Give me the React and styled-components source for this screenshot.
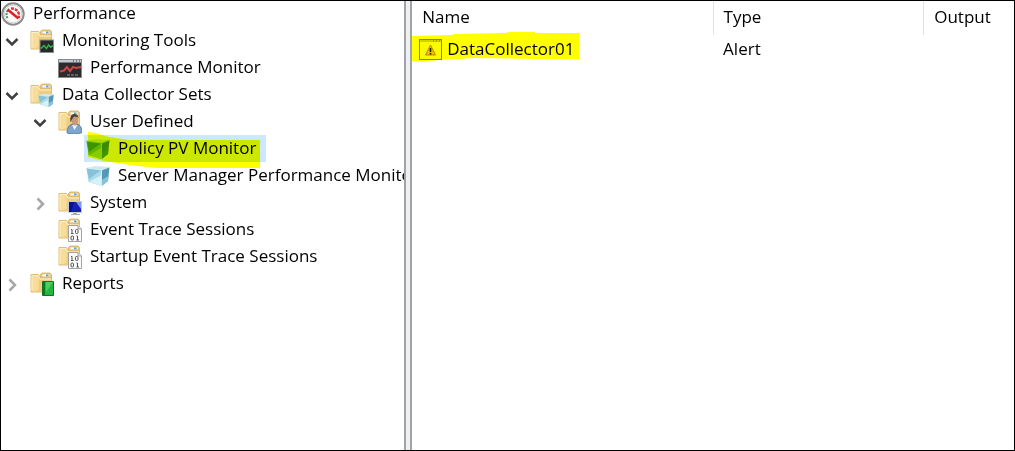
import React from "react";
import styled, { createGlobalStyle, css } from "styled-components";

const GlobalStyle = createGlobalStyle`
  * { box-sizing: border-box; }
  body {
    margin: 0;
    background: #fff;
    color: #000;
    font-family: "Open Sans", "Noto Sans", sans-serif;
    font-size: 17px;
    line-height: 24px;
  }
`;

const Frame = styled.main`
  display: flex;
  min-height: 100vh;
  border: 1px solid #000;
`;

const TreePane = styled.nav`
  flex: 0 0 40%;
  min-width: 0;
  overflow: hidden;
  border-right: 2px solid #a0a3a9;
`;

const Splitter = styled.div`
  flex: 0 0 4px;
  background: #f0f0f0;
`;

const ListPane = styled.section`
  flex: 1 1 0;
  min-width: 0;
  border-left: 2px solid #a0a3a9;
`;

const Branch = styled.ul`
  list-style: none;
  margin: 0;
  padding: 0;
`;

const Row = styled.div`
  display: flex;
  align-items: center;
  height: ${(p) => (p.$level === 0 ? 26 : 27)}px;
  padding-left: ${(p) => Math.max(0, p.$level - 1) * 28}px;
`;

const Slot = styled.span`
  flex: 0 0 29px;
  display: flex;
  align-items: center;
`;

const Expander = styled.button`
  display: flex;
  margin: 2px 0 0 3px;
  padding: 0;
  border: 0;
  background: none;
  color: ${(p) => (p.$open ? "#404040" : "#a6a6a6")};
`;

const Item = styled.span`
  position: relative;
  display: flex;
  align-items: center;
  gap: 8px;
  height: 100%;
  white-space: nowrap;
  ${(p) =>
    p.$selected &&
    css`
      margin-left: -2px;
      padding: 0 10px 0 2px;
      background: #cce8ff;
    `}
`;

const Label = styled.span`
  padding-bottom: 2px;
`;

const Marker = styled.svg`
  position: absolute;
  left: 0;
  top: 0;
  overflow: visible;
  pointer-events: none;
  mix-blend-mode: multiply;
`;

const Picture = styled.svg`
  flex: none;
  display: block;
`;

const Table = styled.table`
  width: 100%;
  table-layout: fixed;
  border-collapse: collapse;
`;

const HeadCell = styled.th`
  width: ${(p) => p.$width};
  height: 34px;
  padding: 0 0 2px 10px;
  text-align: left;
  font-weight: 400;
  border-right: ${(p) => (p.$last ? "0" : "1px solid #e2e2e2")};
`;

const Cell = styled.td`
  height: 30px;
  padding: 0 0 2px 10px;
`;

const NameCell = styled(Cell)`
  position: relative;
  padding: 0 0 0 7px;
`;

const NameContent = styled.span`
  display: flex;
  align-items: center;
  gap: 4px;
`;

function Icon({ children }) {
  return (
    <Picture width="24" height="24" viewBox="0 0 24 24" aria-hidden="true">
      {children}
    </Picture>
  );
}

function Folder({ children }) {
  return (
    <Icon>
      <path d="M10.500 6V2.500L12 1h8l1.500 1.500V6z" fill="#e8c983" stroke="#d0ad66" strokeWidth=".8" />
      <rect x="12.500" y="2.500" width="7" height="1.800" fill="#fff" />
      <rect x="16" y="2.500" width="2.500" height="1.800" fill="#57a5d8" />
      <path d="M1 2.500h7.500L10.500 6h11v14H1z" fill="#f7dd99" stroke="#dcb76b" strokeWidth=".9" />
      <path d="M4 20 8.500 17.500V6.500H21V20z" fill="#efcd80" />
      <path d="M2 3.500v15.500M2 3.500h6l2 3.500h11" fill="none" stroke="#fff0c8" />
      {children}
    </Icon>
  );
}

const cubeColors = {
  green: { top: "#a9dc8c", front: "#62b53c", side: "#3b8a2c", shade: "#3f9530", light: "#86cc5e", edge: "#8fd06d" },
  blue: { top: "#cdeaf3", front: "#aadcea", side: "#5598b5", shade: "#86c2d8", light: "#d6f1f8", edge: "#d9f1f7" },
};

function Cube({ tone = "blue" }) {
  const c = cubeColors[tone];
  return (
    <g>
      <path d="M0.500 4 9 2l14.500 1-8 3z" fill={c.top} />
      <path d="m0.500 4 15 2v16L2.500 18z" fill={c.front} />
      <path d="m0.500 4 15 2L3 15z" fill={c.shade} />
      <path d="M15.500 11v11L3 18z" fill={c.light} />
      <path d="m15.500 6 8-3-1.500 14-6.500 5z" fill={c.side} />
      <path d="m15.500 16 7-4-.5 5-6.500 5z" fill={c.shade} />
      <path d="m0.500 4 15 2 8-3M15.500 6v16" fill="none" stroke={c.edge} strokeWidth=".9" />
    </g>
  );
}

const icons = {
  gauge: (
    <Icon>
      <circle cx="12" cy="12" r="10.700" fill="#fff" stroke="#8b8b8b" strokeWidth="2" />
      <circle cx="12" cy="12" r="8.800" fill="#fafafa" stroke="#d2d2d2" />
      <path d="M6.500 16A7 7 0 0 1 8 7" fill="none" stroke="#4b8b68" strokeWidth="2" strokeDasharray="2 1" />
      <path d="M10 6.500a7 7 0 0 1 7.500 9.500" fill="none" stroke="#df3838" strokeWidth="2.500" strokeDasharray="3 1" />
      <path d="m6.500 7.500 11 9" stroke="#e01d25" strokeWidth="2.500" />
    </Icon>
  ),
  tools: (
    <Folder>
      <rect x="10" y="11" width="13.500" height="12.500" fill="#262b29" stroke="#8b8d91" />
      <path d="m11 19.500 3-3 2.500 3 2-3.500 2 2 2.500-1" fill="none" stroke="#35b64d" strokeWidth="1.500" />
    </Folder>
  ),
  monitor: (
    <Icon>
      <rect x="0.500" y="3.500" width="23" height="18" fill="#2d2b2b" stroke="#88898b" />
      <path d="M1 4h22v2.500H1z" fill="#c2cbd2" />
      <path d="M15 5h1m2 0h1m2 0h1" stroke="#566573" strokeWidth="1.500" />
      <path d="m2 15.500 4-1 3-3.500 3 4 3-4 3 1 5-1" fill="none" stroke="#d04848" strokeWidth="2" />
      <path d="M9 19h11" stroke="#999" strokeDasharray="3 1" />
    </Icon>
  ),
  sets: (
    <Folder>
      <g transform="translate(8 9.500) scale(.67)">
        <Cube />
      </g>
    </Folder>
  ),
  user: (
    <Folder>
      <path d="M9 23c0-5 2-8 5-8.500h5c3 0 5 3 5 8-4 2-10 2-15 .5z" fill="#7ea5d0" stroke="#4a709c" strokeWidth=".8" />
      <path d="m14 15 2.500 5 3-5" fill="#eef3f7" />
      <ellipse cx="16.700" cy="10" rx="3.500" ry="5.500" fill="#c79a7b" />
      <path d="M12.500 12c-2-10 8-10 8.500-3l-1-2-4-.5-1.500 2z" fill="#4b4039" />
    </Folder>
  ),
  green: (
    <Icon>
      <Cube tone="green" />
    </Icon>
  ),
  blue: (
    <Icon>
      <Cube />
    </Icon>
  ),
  system: (
    <Folder>
      <rect x="10.500" y="10.500" width="13" height="11" fill="#1620b4" stroke="#c9ccd3" />
      <path d="M18 11h5v7z" fill="#7f95f2" />
      <path d="M11 11h5l-3 10h-2z" fill="#0a1190" />
      <path d="M15 22h4v1h3v1h-9v-1h2z" fill="#a8abb0" />
    </Folder>
  ),
  trace: (
    <Folder>
      <path d="M10.500 7.500H20l3.500 3.500v12.500h-13z" fill="#fafafa" stroke="#a3a3a3" />
      <path d="M20 7.500V11h3.500" fill="#ddd" stroke="#a3a3a3" />
      <path d="M13 11.500h1v4m-1 0h2.500M18.500 18h1v4m-1 0h2.500" fill="none" stroke="#555" />
      <rect x="17.500" y="11.500" width="2.500" height="4" rx="1" fill="none" stroke="#555" />
      <rect x="13" y="18" width="2.500" height="4" rx="1" fill="none" stroke="#555" />
    </Folder>
  ),
  reports: (
    <Folder>
      <path d="M12.500 9.500h11v14h-11z" fill="#22b83f" stroke="#176f28" />
      <path d="M13 10h2v13h-2z" fill="#087c24" />
      <path d="M16 10h7l-7 10z" fill="#6bdc78" opacity=".6" />
    </Folder>
  ),
  alert: (
    <Icon>
      <rect x="0.500" y="1.500" width="22" height="20" fill="#fbfbfb" stroke="#8c8c8c" />
      <path d="M1 2h21v2H1z" fill="#d2d2d2" />
      <path d="M14 3h1m2 0h1m2 0h1" stroke="#777" />
      <path d="m11.500 7 5 10h-10z" fill="#f1c14b" stroke="#bd8530" strokeLinejoin="round" />
      <path d="M11.500 10v4m0 1v1.500" stroke="#222" strokeWidth="1.600" />
    </Icon>
  ),
};

const tree = [
  {
    label: "Performance",
    icon: "gauge",
    children: [
      { label: "Monitoring Tools", icon: "tools", open: true, children: [{ label: "Performance Monitor", icon: "monitor" }] },
      {
        label: "Data Collector Sets",
        icon: "sets",
        open: true,
        children: [
          {
            label: "User Defined",
            icon: "user",
            open: true,
            children: [
              { label: "Policy PV Monitor", icon: "green", selected: true },
              { label: "Server Manager Performance Monitor", icon: "blue" },
            ],
          },
          { label: "System", icon: "system", open: false },
          { label: "Event Trace Sessions", icon: "trace" },
          { label: "Startup Event Trace Sessions", icon: "trace" },
        ],
      },
      { label: "Reports", icon: "reports", open: false },
    ],
  },
];

function Node({ node, level }) {
  const { label, icon, open, selected, children } = node;
  return (
    <li>
      <Row $level={level}>
        {level > 0 && (
          <Slot>
            {open !== undefined && (
              <Expander type="button" $open={open} aria-expanded={open} aria-label={label}>
                <svg width="16" height="16" viewBox="0 0 16 16" fill="none" stroke="currentColor" strokeWidth="2.500">
                  <path d={open ? "m2.500 5 5.500 5.500L13.500 5" : "m5.500 2.500 5.500 5.500-5.500 5.500"} />
                </svg>
              </Expander>
            )}
          </Slot>
        )}
        <Item $selected={selected}>
          {icons[icon]}
          <Label>{label}</Label>
          {selected && (
            <Marker width="176" height="34" aria-hidden="true">
              <path d="M4-3 12-2 25 2 45 5H176V33H72L46 30 20 26 4 22z" fill="#ff0" />
            </Marker>
          )}
        </Item>
      </Row>
      {children && (
        <Branch>
          {children.map((c) => (
            <Node key={c.label} node={c} level={level + 1} />
          ))}
        </Branch>
      )}
    </li>
  );
}

export default function App() {
  return (
    <>
      <GlobalStyle />
      <Frame>
        <TreePane aria-label="Console tree">
          <Branch>
            {tree.map((n) => (
              <Node key={n.label} node={n} level={0} />
            ))}
          </Branch>
        </TreePane>
        <Splitter />
        <ListPane>
          <Table>
            <thead>
              <tr>
                <HeadCell $width="50%">Name</HeadCell>
                <HeadCell $width="35%">Type</HeadCell>
                <HeadCell $width="15%" $last>Output</HeadCell>
              </tr>
            </thead>
            <tbody>
              <tr>
                <NameCell>
                  <NameContent>
                    {icons.alert}
                    <Label>DataCollector01</Label>
                  </NameContent>
                  <Marker width="168" height="30" aria-hidden="true">
                    <path d="M0 1 41 0 42-1 95-2V-3H123V-2H167V24H123L60 23 48 24 26 25 12 27 0 26z" fill="#ff0" />
                  </Marker>
                </NameCell>
                <Cell>Alert</Cell>
                <Cell />
              </tr>
            </tbody>
          </Table>
        </ListPane>
      </Frame>
    </>
  );
}
